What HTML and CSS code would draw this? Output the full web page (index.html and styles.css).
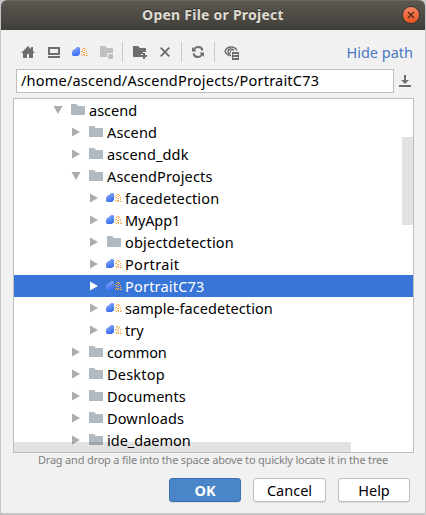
FILE: index.html
```html
<!DOCTYPE html>
<html lang="en">
<head>
<meta charset="utf-8">
<title>Open File or Project</title>
<link rel="stylesheet" href="styles.css">
</head>
<body>
<svg class="defs" aria-hidden="true">
  <defs>
    <linearGradient id="blue" x1="0" y1="0" x2="0.4" y2="1"><stop offset="0" stop-color="#8fb0fa"/><stop offset="1" stop-color="#3d70f2"/></linearGradient>
    <symbol id="folder" viewBox="0 0 14 11"><path d="M0 0h5l2 2h7v9H0z" fill="#afb9bf"/></symbol>
    <symbol id="right" viewBox="0 0 10 10"><path d="M1 .5 9 5 1 9.500z" fill="currentColor"/></symbol>
    <symbol id="down" viewBox="0 0 10 10"><path d="M.5 1h9L5 9z" fill="currentColor"/></symbol>
    <symbol id="project" viewBox="0 0 16 10"><path d="M0 8V5l1-2 2-1 2-2h2l1 1v6L6 9H1z" fill="url(#blue)"/><path d="M11 1h2v1h-2zM10 2h1v1h-1zM13 2h1v1h-1zM9 4h2v1H9zM12 3h1v1h-1zM14 4h1v1h-1zM11 5h2v1h-2zM9 7h1v1H9zM11 7h2v1h-2zM14 6h1v1h-1zM14 8h2v1h-2zM10 8h1v1h-1zM12 8h1v1h-1z" fill="#f8a849"/></symbol>
  </defs>
</svg>
<main class="dialog">
  <header class="titlebar"><h1>Open File or Project</h1>
    <span class="close"><svg width="8" height="8" viewBox="0 0 8 8"><path d="m1 1 6 6M7 1 1 7" stroke="#4b2418" stroke-width="1.2"/></svg></span>
  </header>
  <nav class="toolbar">
    <svg class="tool" width="14" height="12" viewBox="0 0 14 12"><path d="M7 0 0 7h2v5h4V8h2v4h4V7h2l-2-2V1h-2v2z" fill="#6e6e6e"/></svg>
    <svg class="tool desktop" width="12" height="11" viewBox="0 0 12 11"><path d="M1 1h10v6H1zM0 10h12" fill="none" stroke="#6e6e6e" stroke-width="2"/></svg>
    <svg class="tool project-tool" width="16" height="10"><use href="#project"/></svg>
    <svg class="tool module" width="14" height="13" viewBox="0 0 14 13"><path d="M0 0h5l2 2h6v5H7v4H0zM8 8h5v5H8z" fill="#c0c0c0"/></svg>
    <i class="sep sep-a"></i>
    <svg class="tool new-folder" width="14" height="13" viewBox="0 0 14 13"><path d="M0 0h5l2 2h6v4h-3v2H8v3H0z" fill="#6e6e6e"/><path d="M11 7v6M8 10h6" stroke="#6e6e6e" stroke-width="2"/></svg>
    <svg class="tool delete" width="10" height="10" viewBox="0 0 10 10"><path d="m.7.7 8.600 8.600M9.300.7.7 9.300" stroke="#6e6e6e" stroke-width="1.900"/></svg>
    <i class="sep sep-b"></i>
    <svg class="tool refresh" width="12" height="12" viewBox="0 0 12 12"><path d="M2 5A4.300 4.300 0 0 1 10.500 4.500M10 7A4.300 4.300 0 0 1 1.500 7.500" fill="none" stroke="#6e6e6e" stroke-width="1.900"/><path d="M0 1v4.500h4.500zM12 11V6.500H7.500z" fill="#6e6e6e"/></svg>
    <i class="sep sep-c"></i>
    <svg class="tool eye" width="15" height="14" viewBox="0 0 15 14"><path d="M7 9.700C4 9.500 2 8 1 5.500c1-3 3.300-4.500 6-4.500s5 1.200 6 3.500M6.500 8C4.500 8 4 7 4 5.500S5.500 3 7 3s2.500 1 2.500 2" fill="none" stroke="#6e6e6e" stroke-width="1.400"/><circle cx="7" cy="5.500" r="1.200" fill="#6e6e6e"/><path d="M7 5h8v9H7z" fill="#f1f1f1"/><path d="M8 6h7v8H8z" fill="#6e6e6e"/><path d="M9 8.500h5M9 11.500h5" stroke="#f1f1f1"/></svg>
    <a class="hide-path">Hide path</a>
  </nav>
  <div class="path-row">
    <div class="path-field"><span>/home/ascend/AscendProjects/PortraitC73</span></div>
    <svg class="download" width="12" height="12" viewBox="0 0 12 12"><path d="M5 0h2v5h3L6 9 2 5h3zM0 10h12v2H0z" fill="#6e6e6e"/></svg>
  </div>
  <section class="tree">
    <div class="row l0"><svg class="arrow"><use href="#down"/></svg><svg class="folder"><use href="#folder"/></svg><span>ascend</span></div>
    <div class="row l1"><svg class="arrow"><use href="#right"/></svg><svg class="folder"><use href="#folder"/></svg><span class="wide">Ascend</span></div>
    <div class="row l1"><svg class="arrow"><use href="#right"/></svg><svg class="folder"><use href="#folder"/></svg><span class="wide">ascend_ddk</span></div>
    <div class="row l1"><svg class="arrow"><use href="#down"/></svg><svg class="folder"><use href="#folder"/></svg><span class="wide">AscendProjects</span></div>
    <div class="row l2"><svg class="arrow"><use href="#right"/></svg><svg class="project"><use href="#project"/></svg><span class="wide">facedetection</span></div>
    <div class="row l2"><svg class="arrow"><use href="#right"/></svg><svg class="project"><use href="#project"/></svg><span class="tight">MyApp1</span></div>
    <div class="row l2"><svg class="arrow"><use href="#right"/></svg><svg class="folder"><use href="#folder"/></svg><span class="wider">objectdetection</span></div>
    <div class="row l2"><svg class="arrow"><use href="#right"/></svg><svg class="project"><use href="#project"/></svg><span class="widest">Portrait</span></div>
    <div class="row l2 selected"><svg class="arrow"><use href="#right"/></svg><svg class="project"><use href="#project"/></svg><span class="wider">PortraitC73</span></div>
    <div class="row l2"><svg class="arrow"><use href="#right"/></svg><svg class="project"><use href="#project"/></svg><span class="slight">sample-facedetection</span></div>
    <div class="row l2"><svg class="arrow"><use href="#right"/></svg><svg class="project"><use href="#project"/></svg><span>try</span></div>
    <div class="row l1"><svg class="arrow"><use href="#right"/></svg><svg class="folder"><use href="#folder"/></svg><span class="tight">common</span></div>
    <div class="row l1"><svg class="arrow"><use href="#right"/></svg><svg class="folder"><use href="#folder"/></svg><span class="wider">Desktop</span></div>
    <div class="row l1"><svg class="arrow"><use href="#right"/></svg><svg class="folder"><use href="#folder"/></svg><span class="slight">Documents</span></div>
    <div class="row l1"><svg class="arrow"><use href="#right"/></svg><svg class="folder"><use href="#folder"/></svg><span class="wide">Downloads</span></div>
    <div class="row l1"><svg class="arrow"><use href="#right"/></svg><svg class="folder"><use href="#folder"/></svg><span>ide_daemon</span></div>
    <i class="thumb-v"></i><i class="thumb-h"></i>
  </section>
  <p class="hint">Drag and drop a file into the space above to quickly locate it in the tree</p>
  <footer class="buttons"><button class="ok">OK</button><button class="cancel">Cancel</button><button class="help">Help</button></footer>
</main>
</body>
</html>
```
FILE: styles.css
```css
* { box-sizing: border-box; }
body { margin: 0; width: 426px; height: 515px; overflow: hidden; background: #c4c4c4; font-family: "Noto Sans", "Open Sans", sans-serif; font-size: 14.5px; color: #000; }
svg { display: block; flex: none; }
.defs { position: absolute; width: 0; height: 0; }
.dialog { width: 424px; height: 513px; margin-left: 1px; background: #f1f1f1; border-radius: 6px 6px 0 0; overflow: hidden; }
.titlebar { height: 30px; position: relative; display: flex; justify-content: center; background: linear-gradient(#5b5850, #403e39); border-top: 1px solid #6b6860; }
h1 { margin: 0; font-size: 14px; line-height: 28px; color: #dfdbd2; white-space: nowrap; letter-spacing: .24px; text-shadow: 0 -1px #302e29; }
.close { position: absolute; right: 6px; top: 6px; width: 16px; height: 16px; border-radius: 50%; background: linear-gradient(#f58462, #e9541f); box-shadow: 0 0 0 1px #38332e; display: grid; place-items: center; }
.toolbar { height: 39px; padding: 5px 0 0 20px; display: flex; align-items: center; }
.desktop { margin-left: 13px; }
.project-tool { margin-left: 12px; }
.module { margin-left: 12px; }
.sep { width: 1px; height: 20px; background: #c8c8c8; }
.sep-a { margin-left: 8px; }
.new-folder { margin-left: 10px; }
.delete { margin-left: 13px; }
.sep-b { margin-left: 11px; }
.refresh { margin-left: 10px; }
.sep-c { margin-left: 10px; }
.eye { margin-left: 9px; margin-top: 2px; }
.hide-path { margin-left: auto; margin-right: 12px; color: #4a78c2; line-height: 22px; white-space: nowrap; }
.path-row { height: 24px; display: flex; align-items: center; padding-left: 15px; }
.path-field { width: 378px; height: 24px; background: #fff; border: 1px solid #bdbdbd; padding-left: 4px; line-height: 21px; white-space: nowrap; letter-spacing: .21px; }
.download { margin-left: 5px; }
.tree { position: relative; width: 401px; height: 355px; margin: 5px 0 0 12px; background: #fff; border: 1px solid #bdbdbd; overflow: hidden; }
.row { height: 22px; display: flex; align-items: center; white-space: nowrap; line-height: 22px; }
.l0 { padding-left: 39px; }
.l1 { padding-left: 57px; }
.l2 { padding-left: 75px; }
.arrow { width: 10px; height: 10px; color: #adadad; }
.folder { width: 14px; height: 11px; margin: 0 4px 1px 8px; }
.project { width: 16px; height: 10px; margin: 0 3px 0 7px; }
.tight { letter-spacing: -.15px; }
.slight { letter-spacing: .06px; }
.wide { letter-spacing: .14px; }
.wider { letter-spacing: .2px; }
.widest { letter-spacing: .35px; }
.selected { background: #3875d7; color: #fff; }
.selected .arrow { color: #fff; }
.thumb-v, .thumb-h { position: absolute; background: rgba(0, 0, 0, .115); }
.thumb-v { right: 0; top: 38px; width: 11px; height: 88px; }
.thumb-h { left: 0; bottom: 0; width: 337px; height: 10px; }
.hint { margin: 0; height: 15px; font-size: 11px; line-height: 14px; letter-spacing: -.19px; color: #808080; text-align: center; white-space: nowrap; }
.buttons { display: flex; justify-content: flex-end; gap: 12px; padding: 10px 15px 0 0; }
button { height: 24px; padding: 0; font: inherit; line-height: 20px; background: #fff; border: 1px solid #bdbdbd; border-radius: 3px; box-shadow: 0 1px #dedede; }
.ok { width: 72px; background: #4a86c7; border-color: #3972b5; color: #fff; font-weight: 700; }
.cancel { width: 73px; }
.help { width: 72px; }
```
